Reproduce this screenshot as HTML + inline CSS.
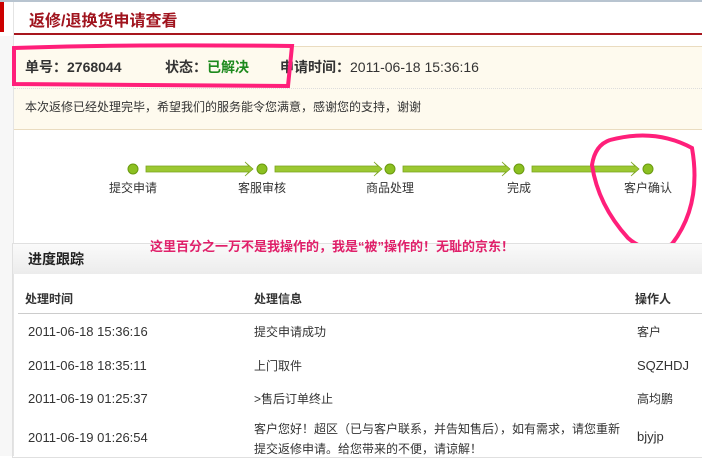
<html><head><style>
body{margin:0;width:702px;height:456px;background:#fff;position:relative;overflow:hidden;font-family:"Liberation Sans","Noto Sans CJK SC",sans-serif;font-size:12px;color:#333}
.a{position:absolute;white-space:nowrap}
</style></head><body>
<div class="a" style="left:0;top:0;width:702px;height:2px;background:#b8c4d0"></div>
<div class="a" style="left:0;top:2px;width:4px;height:30px;background:#c00"></div>
<div class="a" style="left:0;top:36px;width:13px;height:420px;background:#f7f7f7"></div>
<div class="a" style="left:13px;top:2px;width:1px;height:454px;background:#e4e4e4"></div>
<div class="a" style="left:29px;top:7px;font-size:16px;font-weight:bold;color:#a0141e">返修/退换货申请查看</div>
<div class="a" style="left:14px;top:33px;width:688px;height:2px;background:#a8161e"></div>
<div class="a" style="left:14px;top:46px;width:688px;height:82px;background:#fefaee;border-top:1px solid #eadcc0;border-bottom:1px solid #eadcc0"></div>
<div class="a" style="left:14px;top:88px;width:688px;border-top:1px dotted #ddd"></div>
<div class="a" style="left:25px;top:57px;font-size:14px;font-weight:bold;color:#333">单号：2768044</div>
<div class="a" style="left:165px;top:57px;font-size:14px;font-weight:bold;color:#333">状态：<span style="color:#1d8a1d">已解决</span></div>
<div class="a" style="left:280px;top:57px;font-size:14px;color:#333"><b>申请时间：</b>2011-06-18 15:36:16</div>
<div class="a" style="left:25px;top:98px;font-size:12px;color:#333">本次返修已经处理完毕，希望我们的服务能令您满意，感谢您的支持，谢谢</div>
<svg class="a" style="left:0;top:0" width="702" height="456">
<g fill="#8cc021" stroke="#6a9a10" stroke-width="1">
<circle cx="133" cy="169" r="5"/><circle cx="262" cy="169" r="5"/><circle cx="390" cy="169" r="5"/><circle cx="519" cy="169" r="5"/><circle cx="648" cy="169" r="5"/>
</g>
<g fill="#9cc832" stroke="#7aa41c" stroke-width="0.8">
<path d="M146 166h103l-4-4 8 7-8 7 4-4h-103z"/>
<path d="M275 166h103l-4-4 8 7-8 7 4-4h-103z"/>
<path d="M403 166h103l-4-4 8 7-8 7 4-4h-103z"/>
<path d="M532 166h103l-4-4 8 7-8 7 4-4h-103z"/>
</g>
<path d="M14 48 Q120 44 292 46 L288 86 L14 84 Z" fill="none" stroke="#ff1f7a" stroke-width="4"/>
<path d="M610 140 Q655 128 692 148 Q702 205 672 244 Q648 256 628 238 Q598 205 592 165 Q595 145 610 140" fill="none" stroke="#ff1f7a" stroke-width="4"/>
</svg>
<div class="a" style="left:109px;top:179px">提交申请</div>
<div class="a" style="left:238px;top:179px">客服审核</div>
<div class="a" style="left:366px;top:179px">商品处理</div>
<div class="a" style="left:507px;top:179px">完成</div>
<div class="a" style="left:624px;top:179px">客户确认</div>
<div class="a" style="left:12px;top:243px;width:690px;height:213px;border:1px solid #e0e0e0;border-right:none"></div>
<div class="a" style="left:13px;top:244px;width:689px;height:30px;background:linear-gradient(#fafafa,#ececec)"></div>
<div class="a" style="left:28px;top:249px;font-size:14px;font-weight:bold;color:#222">进度跟踪</div>
<div class="a" style="left:150px;top:236px;font-size:13px;font-weight:bold;color:#e0206a">这里百分之一万不是我操作的，我是“被”操作的！无耻的京东！</div>
<div class="a" style="left:25px;top:290px;font-weight:bold">处理时间</div>
<div class="a" style="left:254px;top:290px;font-weight:bold">处理信息</div>
<div class="a" style="left:635px;top:290px;font-weight:bold">操作人</div>
<div class="a" style="left:18px;top:313px;width:684px;height:1px;background:#ccc"></div>
<div class="a" style="left:28px;top:324px;font-size:13px">2011-06-18 15:36:16</div>
<div class="a" style="left:254px;top:323px">提交申请成功</div>
<div class="a" style="left:637px;top:323px">客户</div>
<div class="a" style="left:28px;top:358px;font-size:13px">2011-06-18 18:35:11</div>
<div class="a" style="left:254px;top:357px">上门取件</div>
<div class="a" style="left:637px;top:358px;font-size:13px">SQZHDJ</div>
<div class="a" style="left:28px;top:391px;font-size:13px">2011-06-19 01:25:37</div>
<div class="a" style="left:254px;top:390px">&gt;售后订单终止</div>
<div class="a" style="left:637px;top:390px">高均鹏</div>
<div class="a" style="left:28px;top:430px;font-size:13px">2011-06-19 01:26:54</div>
<div class="a" style="left:254px;top:419px;line-height:20px">客户您好！超区（已与客户联系，并告知售后），如有需求，请您重新<br>提交返修申请。给您带来的不便，请谅解！</div>
<div class="a" style="left:637px;top:429px;font-size:13px">bjyjp</div>
</body></html>
